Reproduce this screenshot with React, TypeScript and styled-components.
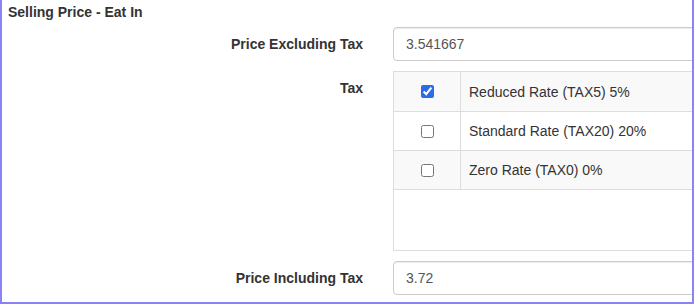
import React from 'react';
import styled, { createGlobalStyle } from 'styled-components';

const GlobalStyle = createGlobalStyle`
  html, body {
    margin: 0;
    padding: 0;
    background: #fff;
  }
  body {
    font-family: "Liberation Sans", Arial, sans-serif;
    font-size: 14px;
    color: #333;
  }
`;

const Frame = styled.div`
  box-sizing: border-box;
  width: 694px;
  height: 304px;
  overflow: hidden;
  border-left: 2px solid #8b83f5;
  border-right: 2px solid #8b83f5;
  border-bottom: 2px solid #8b83f5;
  background: #fff;
`;

const Heading = styled.div`
  font-weight: bold;
  font-size: 14px;
  line-height: 20px;
  padding: 2px 0 0 6px;
  color: #333;
`;

const Form = styled.div`
  display: flex;
  flex-direction: column;
  gap: 10px;
  margin-top: 5px;
`;

const FormRow = styled.div<{ $top?: boolean }>`
  display: grid;
  grid-template-columns: 361px 420px;
  column-gap: 30px;
  align-items: ${(p) => (p.$top ? 'start' : 'center')};
`;

const Label = styled.label<{ $top?: boolean }>`
  text-align: right;
  font-weight: bold;
  font-size: 14px;
  line-height: 20px;
  color: #333;
  padding-top: ${(p) => (p.$top ? '7px' : '0')};
`;

const TextInput = styled.input`
  box-sizing: border-box;
  height: 34px;
  width: 100%;
  padding: 6px 12px;
  border: 1px solid #ccc;
  border-radius: 4px;
  box-shadow: inset 0 1px 1px rgba(0, 0, 0, 0.075);
  font-family: "Liberation Sans", Arial, sans-serif;
  font-size: 14px;
  color: #555;
  background: #fff;
  outline: none;
`;

const TaxBox = styled.div`
  box-sizing: border-box;
  height: 180px;
  border: 1px solid #ddd;
  border-right: none;
`;

const TaxRow = styled.div<{ $striped: boolean; $first: boolean }>`
  display: grid;
  grid-template-columns: 67px 1fr;
  height: ${(p) => (p.$first ? '39px' : '38px')};
  border-bottom: 1px solid #ddd;
  background: ${(p) => (p.$striped ? '#f9f9f9' : '#fff')};
`;

const CheckCell = styled.div`
  display: flex;
  align-items: center;
  justify-content: center;
  border-right: 1px solid #ddd;
`;

const Check = styled.input`
  width: 13px;
  height: 13px;
  margin: 0;
  accent-color: #2b6de8;
`;

const NameCell = styled.div`
  display: flex;
  align-items: center;
  padding-left: 8px;
  font-size: 14px;
  color: #333;
`;

const rates = [
  { name: 'Reduced Rate (TAX5) 5%', checked: true },
  { name: 'Standard Rate (TAX20) 20%', checked: false },
  { name: 'Zero Rate (TAX0) 0%', checked: false },
];

export default function App() {
  return (
    <>
      <GlobalStyle />
      <Frame>
        <Heading>Selling Price - Eat In</Heading>
        <Form>
          <FormRow>
            <Label>Price Excluding Tax</Label>
            <TextInput defaultValue="3.541667" />
          </FormRow>
          <FormRow $top>
            <Label $top>Tax</Label>
            <TaxBox>
              {rates.map((r, i) => (
                <TaxRow key={r.name} $striped={i % 2 === 0} $first={i === 0}>
                  <CheckCell>
                    <Check type="checkbox" defaultChecked={r.checked} />
                  </CheckCell>
                  <NameCell>{r.name}</NameCell>
                </TaxRow>
              ))}
            </TaxBox>
          </FormRow>
          <FormRow>
            <Label>Price Including Tax</Label>
            <TextInput defaultValue="3.72" />
          </FormRow>
        </Form>
      </Frame>
    </>
  );
}
